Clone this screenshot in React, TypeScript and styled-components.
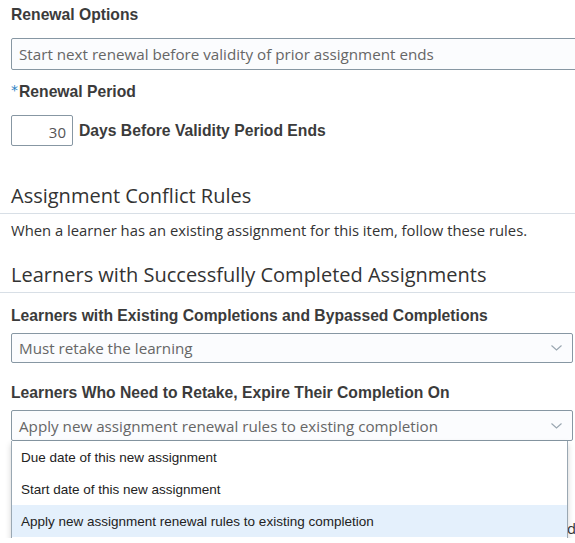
import React from "react";
import styled, { createGlobalStyle } from "styled-components";

const GlobalStyle = createGlobalStyle`
  html, body {
    margin: 0;
    padding: 0;
    background: #ffffff;
    overflow: hidden;
  }
`;

const Page = styled.div`
  width: 640px;
  padding: 6px 0 0 11px;
  font-family: "Open Sans", sans-serif;
  color: #333333;
`;

const Label = styled.div<{ $gap?: number }>`
  font-family: "Liberation Sans", Arial, sans-serif;
  font-weight: bold;
  font-size: 15.7px;
  line-height: 18px;
  color: #3b3b3b;
  white-space: nowrap;
  margin-top: ${(p) => p.$gap ?? 0}px;
`;

const Required = styled.span`
  display: inline-block;
  vertical-align: top;
  margin: -2px 1px 0 0;
  font-family: "DejaVu Sans", sans-serif;
  font-weight: normal;
  font-size: 14px;
  color: #2b7fc3;
`;

const Field = styled.div<{ $width: number; $height?: number; $gap?: number }>`
  box-sizing: border-box;
  width: ${(p) => p.$width}px;
  height: ${(p) => p.$height ?? 32}px;
  margin-top: ${(p) => p.$gap ?? 0}px;
  display: flex;
  align-items: center;
  justify-content: space-between;
  padding: 0 10px 0 7px;
  background: #fbfcfe;
  border: 1px solid #8797a3;
  border-radius: 2px;
  font-size: 15.2px;
  color: #666666;
  white-space: nowrap;
`;

const NumberRow = styled.div`
  display: flex;
  align-items: center;
  gap: 6px;
  margin-top: 14px;
`;

const NumberBox = styled.div`
  box-sizing: border-box;
  width: 62px;
  height: 31px;
  padding: 2px 6px 0 0;
  display: flex;
  align-items: center;
  justify-content: flex-end;
  border: 1px solid #8797a3;
  border-radius: 2px;
  font-size: 15px;
  color: #555555;
`;

const SectionTitle = styled.h2<{ $gap: number }>`
  margin: ${(p) => p.$gap}px 0 0 -11px;
  padding: 0 0 3px 11px;
  font-size: 20px;
  font-weight: normal;
  line-height: 28px;
  color: #333333;
  border-bottom: 1px solid #d8dfe6;
`;

const Text = styled.p<{ $gap?: number }>`
  margin: ${(p) => p.$gap ?? 6}px 0 0;
  font-size: 14.8px;
  line-height: 20px;
  color: #333333;
  white-space: nowrap;
`;

const SelectWrap = styled.div`
  position: relative;
`;

const Menu = styled.ul`
  position: absolute;
  top: 100%;
  left: 0;
  z-index: 2;
  box-sizing: border-box;
  width: 557px;
  margin: 0;
  padding: 0 0 2px;
  list-style: none;
  background: #ffffff;
  border: 1px solid #9aa8b3;
  border-top: none;
  box-shadow: 0 3px 6px rgba(0, 0, 0, 0.18);
`;

const MenuItem = styled.li<{ $active?: boolean }>`
  height: 32px;
  padding: 0 9px;
  display: flex;
  align-items: center;
  font-family: "Liberation Sans", Arial, sans-serif;
  font-size: 13.5px;
  color: #222222;
  background: ${(p) => (p.$active ? "#e4f0fc" : "transparent")};
`;

const Chevron = () => (
  <svg width="11" height="6" viewBox="0 0 11 6">
    <polyline
      points="0.5,0.5 5.5,5 10.5,0.5"
      fill="none"
      stroke="#99a6b0"
      strokeWidth="1.1"
    />
  </svg>
);

const options = [
  "Due date of this new assignment",
  "Start date of this new assignment",
  "Apply new assignment renewal rules to existing completion",
];

const App: React.FC = () => {
  return (
    <>
      <GlobalStyle />
      <Page>
        <Label>Renewal Options</Label>
        <Field $width={640} $gap={14}>
          Start next renewal before validity of prior assignment ends
        </Field>

        <Label $gap={13}>
          <Required>*</Required>Renewal Period
        </Label>
        <NumberRow>
          <NumberBox>30</NumberBox>
          <Label>Days Before Validity Period Ends</Label>
        </NumberRow>

        <SectionTitle $gap={36}>Assignment Conflict Rules</SectionTitle>
        <Text>
          When a learner has an existing assignment for this item, follow these
          rules.
        </Text>

        <SectionTitle $gap={21}>
          Learners with Successfully Completed Assignments
        </SectionTitle>

        <Label $gap={14}>
          Learners with Existing Completions and Bypassed Completions
        </Label>
        <Field $width={562} $height={30} $gap={8}>
          Must retake the learning
          <Chevron />
        </Field>

        <Label $gap={21}>
          Learners Who Need to Retake, Expire Their Completion On
        </Label>
        <SelectWrap>
          <Field $width={562} $height={31} $gap={8}>
            Apply new assignment renewal rules to existing completion
            <Chevron />
          </Field>
          <Menu>
            {options.map((o, i) => (
              <MenuItem key={o} $active={i === options.length - 1}>
                {o}
              </MenuItem>
            ))}
          </Menu>
        </SelectWrap>

        <Label $gap={58}>
          Learners with Assignments in Progress Can Continue Their Learning Until
        </Label>
        <Text $gap={1}>
          Learners who have started the learning keep their progress and the
          existing due date.
        </Text>
      </Page>
    </>
  );
};

export default App;
